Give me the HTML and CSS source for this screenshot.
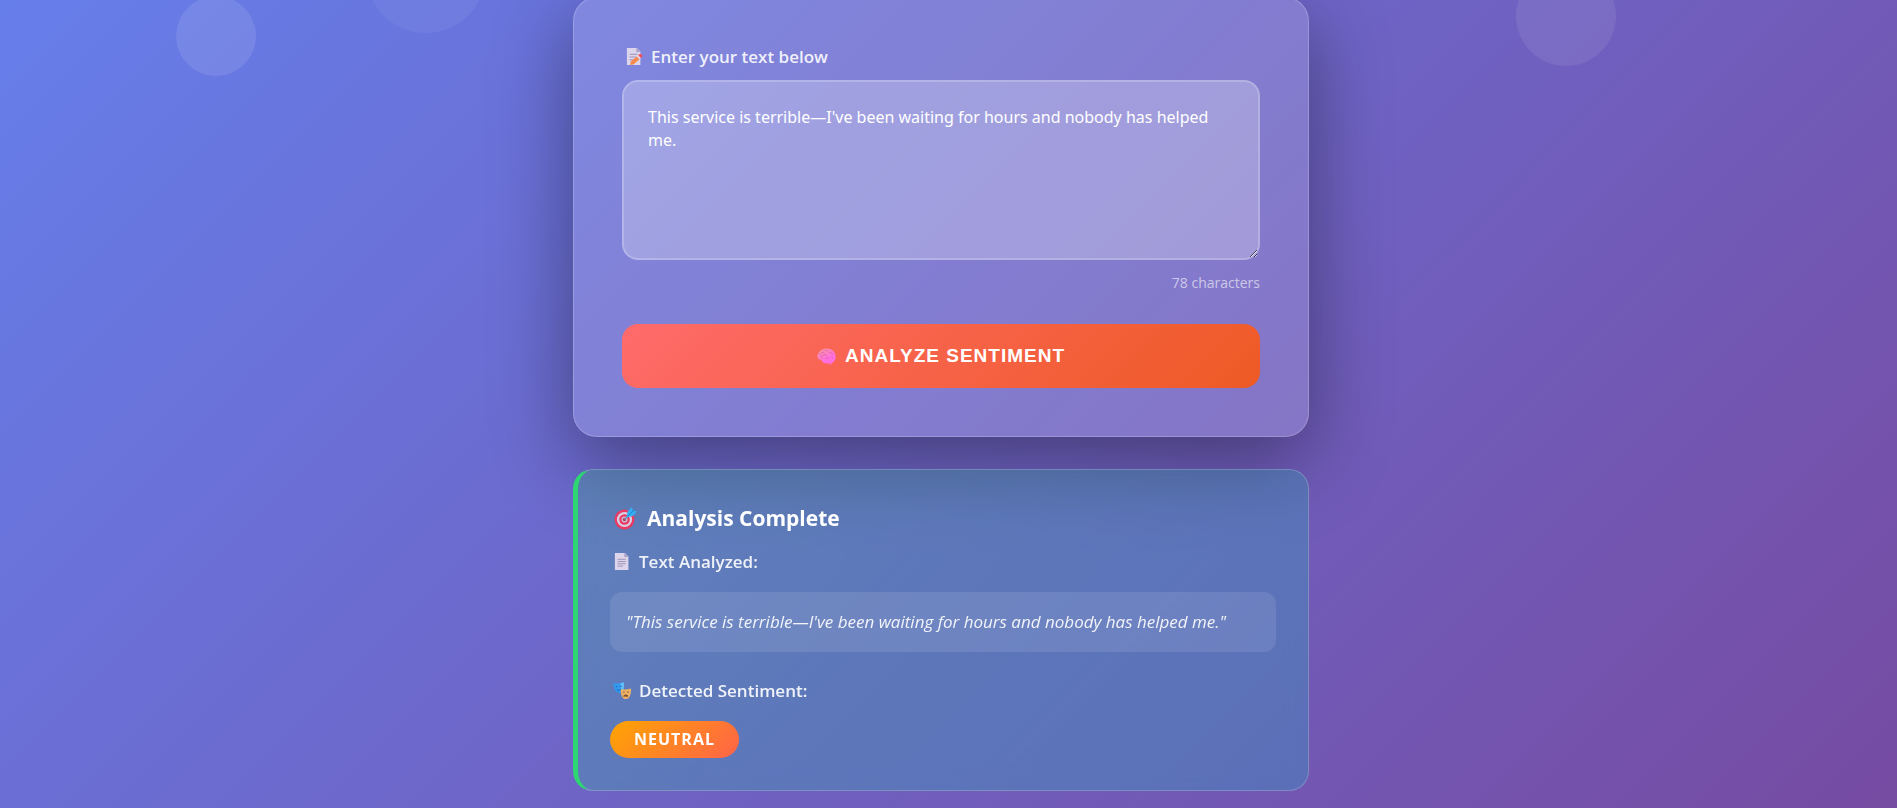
FILE: index.html
```html
<!DOCTYPE html>
<html lang="en">
<head>
<meta charset="utf-8">
<meta name="viewport" content="width=device-width, initial-scale=1">
<title>Sentiment Analysis</title>
<link rel="stylesheet" href="styles.css">
</head>
<body>
<div class="bubbles" aria-hidden="true">
  <span class="bubble bubble-small"></span>
  <span class="bubble bubble-large"></span>
  <span class="bubble bubble-medium"></span>
</div>
<main class="container">
  <form class="card">
    <label class="label" for="text">
      <svg class="icon" viewBox="0 0 20 20" aria-hidden="true">
        <path d="M1 0h11l4 4v15H1z" fill="#dcd5ec"/>
        <path d="M11.500 0l4.500 4.500h-4.500z" fill="#a79fc4"/>
        <path d="M4 7h9M4 10h7M4 13h4" stroke="#9c93b8" stroke-width="1.200"/>
        <path d="M4.500 19l1.200-4.200L12 9.500l3 3-6.800 5.800z" fill="#f9894a"/>
        <path d="M12 9.500l3 3 1.600-1.500-3-3z" fill="#ded6ea"/>
        <path d="M13.600 8l1.600-1.200q1.200-.6 2.300.5t.6 2.200L16.600 11z" fill="#f4505c"/>
      </svg>
      Enter your text below
    </label>
    <textarea class="textbox" id="text">This service is terrible—I've been waiting for hours and nobody has helped me.</textarea>
    <p class="counter">78 characters</p>
    <button class="analyze" type="button">
      <svg class="icon-medium" viewBox="0 0 20 20" aria-hidden="true">
        <defs><linearGradient id="brain" x1="0" y1="0" x2="0.6" y2="1"><stop offset="0" stop-color="#f79a98"/><stop offset="0.7" stop-color="#ff6fe0"/></linearGradient></defs>
        <path d="M.8 12Q-.5 8.500 2 5.500 4.500 2 9 1.500q5-.3 8 2.500 2.800 3 2.600 7-.2 3.500-2.600 5.200-.8.5-1.700.5l-.4 2.600-2-2.200q-4 .6-6.400-.8-1.800-1.200-2-3Q2 13.300.8 12z" fill="url(#brain)"/>
        <path d="M2.500 8.500q2-3.500 5-3M4.500 12q-.5-3.500 3-4 2.500-.2 3 1.500M8.500 12.500q2-2 4.500-.5M12.500 5.500q3.500-.2 4 2.500M15 10q1.500.3 1.500 2M8.500 3.500l2.500.5" fill="none" stroke="#d9569c" stroke-opacity=".7" stroke-width=".9"/>
      </svg>
      ANALYZE SENTIMENT
    </button>
  </form>
  <section class="result">
    <h2 class="title">
      <svg class="icon-large" viewBox="0 0 24 24" aria-hidden="true">
        <circle cx="10.500" cy="13.500" r="10" fill="#e93a62"/>
        <circle cx="10.500" cy="13.500" r="7.600" fill="#d9cfe6"/>
        <circle cx="10.500" cy="13.500" r="5.300" fill="#e93a62"/>
        <circle cx="10.500" cy="13.500" r="3" fill="#cfc3dc"/>
        <circle cx="10.500" cy="13.500" r="1.700" fill="#a8395e"/>
        <path d="M10.500 13.500l6-6" stroke="#6a8fb8" stroke-width="1.500"/>
        <path d="M12.500 11.500l1-6L18 1l.8 3.500L23 5.500 19 10z" fill="#35aef2"/>
        <path d="M14 10l6-6" stroke="#1b78c8" stroke-width=".8"/>
      </svg>
      Analysis Complete
    </h2>
    <h3 class="label">
      <svg class="icon" viewBox="0 0 20 20" aria-hidden="true">
        <path d="M1 0h11l4 4v15H1z" fill="#dcd5ec"/>
        <path d="M11.500 0l4.500 4.500h-4.500z" fill="#a79fc4"/>
        <path d="M4 7h9M4 9.500h9M4 12h9M4 14.500h6" stroke="#9c93b8" stroke-width="1.100"/>
      </svg>
      Text Analyzed:
    </h3>
    <p class="quote">"This service is terrible—I've been waiting for hours and nobody has helped me."</p>
    <h3 class="label">
      <svg class="icon" viewBox="0 0 20 20" aria-hidden="true">
        <path d="M-1 1q1.500.8 5 .6Q8 1.500 11 0q.6 4.500-.5 8.500-1 3.500-4 3.800Q2 11.500.5 7.500z" fill="#319bef"/>
        <path d="M7 1.500Q9.500 1 11 0q.6 4.500-.5 8.500-1 1.500-2.500 2z" fill="#63bdf8"/>
        <path d="M2 5l2 .3M6.500 5l2-.5M3 8.500q2.500 2 5-.5" fill="none" stroke="#1762b8" stroke-width="1"/>
        <path d="M7.500 8q5.500 1 11.500-.8.3 5.500-1.500 9-1.500 2.800-4.300 2.800T8.800 16Q7.200 12.500 7.500 8z" fill="#eeb265"/>
        <path d="M9.800 11.500l2.200-.5M14.500 11l2.200.5M10.500 15.700q2.500-3 5.200 0z" fill="#7a4d34" stroke="#7a4d34" stroke-width=".9"/>
      </svg>
      Detected Sentiment:
    </h3>
    <span class="badge">NEUTRAL</span>
  </section>
</main>
</body>
</html>
```
FILE: styles.css
```css
* {
  box-sizing: border-box;
  margin: 0;
}

body {
  position: relative;
  min-height: 100vh;
  padding-right: 15px;
  overflow: hidden;
  font-family: "Open Sans", "Noto Sans", sans-serif;
  font-size: 17px;
  color: #fff;
  background: linear-gradient(135deg, #667eea 0%, #764ba2 100%);
}

.bubbles {
  position: absolute;
  inset: 0;
  overflow: hidden;
}

.bubble {
  position: absolute;
  border-radius: 50%;
  background: rgba(255, 255, 255, 0.1);
}

.bubble-small {
  top: -4px;
  left: 9.3%;
  width: 80px;
  height: 80px;
}

.bubble-large {
  top: -87px;
  left: 19.3%;
  width: 120px;
  height: 120px;
  background: rgba(255, 255, 255, 0.05);
}

.bubble-medium {
  top: -34px;
  left: 79.9%;
  width: 100px;
  height: 100px;
  background: rgba(255, 255, 255, 0.08);
}

.container {
  position: relative;
  display: flex;
  flex-direction: column;
  gap: 32px;
  max-width: 800px;
  margin: -3px auto 0;
  padding: 0 32px;
}

.card {
  display: flex;
  flex-direction: column;
  padding: 47px 48px 48px;
  border: 1px solid rgba(255, 255, 255, 0.2);
  border-radius: 24px;
  background: rgba(255, 255, 255, 0.15);
  box-shadow: 0 24px 80px rgba(0, 0, 0, 0.4);
}

.label {
  display: flex;
  align-items: center;
  gap: 7px;
  padding-left: 4px;
  font-size: 17px;
  font-weight: 600;
  line-height: 24px;
  color: rgba(255, 255, 255, 0.9);
}

.icon {
  flex: none;
  width: 18px;
  height: 18px;
  overflow: visible;
}

.icon-medium {
  flex: none;
  width: 19px;
  height: 19px;
}

.icon-large {
  flex: none;
  width: 24px;
  height: 24px;
}

.textbox {
  display: block;
  width: 100%;
  height: 180px;
  margin-top: 11px;
  padding: 24px;
  border: 2px solid rgba(255, 255, 255, 0.2);
  border-radius: 16px;
  outline: none;
  font-family: "Noto Sans", "Open Sans", sans-serif;
  font-size: 16px;
  line-height: 23px;
  color: #fff;
  background: rgba(255, 255, 255, 0.25);
  resize: vertical;
}

.counter {
  margin: 12px 0 30px;
  font-size: 14px;
  line-height: 22px;
  text-align: right;
  color: rgba(255, 255, 255, 0.6);
}

.analyze {
  display: flex;
  align-items: center;
  justify-content: center;
  gap: 9px;
  width: 100%;
  height: 64px;
  border: 0;
  border-radius: 16px;
  font-family: "Liberation Sans", Arial, sans-serif;
  font-size: 19px;
  font-weight: 700;
  letter-spacing: 1px;
  color: #fff;
  background: linear-gradient(135deg, #ff6b6b, #ee5a24);
}

.result {
  display: flex;
  flex-direction: column;
  padding: 32px;
  border: 1px solid rgba(255, 255, 255, 0.2);
  border-left: 5px solid #2ed573;
  border-radius: 20px;
  background: linear-gradient(135deg, rgba(46, 213, 115, 0.2), rgba(0, 210, 211, 0.2));
  backdrop-filter: blur(10px);
}

.title {
  display: flex;
  align-items: center;
  gap: 9px;
  margin-bottom: 16px;
  padding-left: 4px;
  font-size: 21px;
  font-weight: 700;
  line-height: 32px;
}

.quote {
  margin: 18px 0 27px;
  padding: 16px;
  border-radius: 12px;
  font-style: italic;
  line-height: 28px;
  color: rgba(255, 255, 255, 0.9);
  background: rgba(255, 255, 255, 0.1);
}

.badge {
  align-self: flex-start;
  margin-top: 18px;
  padding: 6px 24px;
  border-radius: 24px;
  font-size: 16px;
  font-weight: 700;
  line-height: 25px;
  letter-spacing: 1px;
  background: linear-gradient(135deg, #ffa502, #ff6348);
}
```
